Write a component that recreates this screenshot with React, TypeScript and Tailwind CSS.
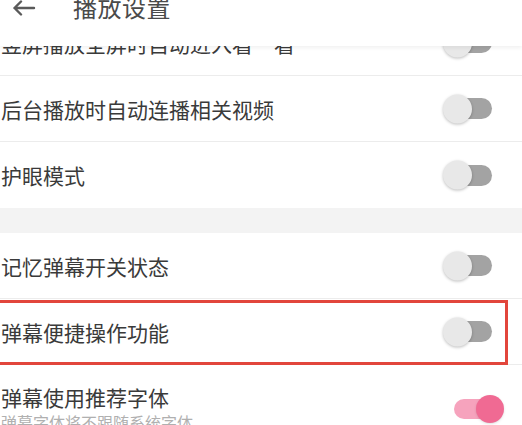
import React from 'react';

const font = { fontFamily: '"Noto Sans CJK SC", "Noto Sans", sans-serif' };

const Toggle: React.FC<{ on?: boolean }> = ({ on }) =>
  on ? (
    <div className="relative h-[20px] w-[46px] rounded-full bg-[#f6a3bd]">
      <span className="absolute right-[-4px] top-1/2 h-[28px] w-[28px] -translate-y-1/2 rounded-full bg-[#f06a93] shadow-sm" />
    </div>
  ) : (
    <div className="relative h-[21px] w-[46px] rounded-full bg-[#a3a3a3]">
      <span className="absolute left-[-3px] top-1/2 h-[29px] w-[29px] -translate-y-1/2 rounded-full bg-[#e8e8e8] shadow-[0_1px_3px_rgba(0,0,0,0.25)]" />
    </div>
  );

const Row: React.FC<{ label: string; on?: boolean; divider?: boolean; boxed?: boolean }> = ({
  label,
  on,
  divider = true,
  boxed,
}) => (
  <div className={`relative flex h-[66px] items-center justify-between pl-[1px] pr-[30px] ${divider ? 'border-b border-[#ececec]' : ''}`}>
    <span className="text-[21px] leading-[26px] text-[#3a3a3a]">{label}</span>
    <Toggle on={on} />
    {boxed && (
      <div className="pointer-events-none absolute left-[-3px] right-[14px] top-[1px] bottom-[-1px] border-[3px] border-[#e2463c]" />
    )}
  </div>
);

export default function App() {
  return (
    <div className="relative h-[425px] w-[522px] overflow-hidden bg-white" style={font}>
      <div className="absolute left-0 right-0 top-0 z-10 h-[46px] bg-white shadow-[0_2px_4px_rgba(0,0,0,0.06)]">
        <div className="flex h-[14px] items-center">
          <svg className="ml-[12px] mt-[2px]" width="24" height="16" viewBox="0 0 24 16" fill="none" stroke="#5a5a5a" strokeWidth="2.4" strokeLinecap="round" strokeLinejoin="round">
            <path d="M22 8H2.5M9 1.5 2.5 8 9 14.5" />
          </svg>
          <span className="ml-[37px] text-[24px] leading-[28px] tracking-[0.5px] text-[#4a4a4a]">播放设置</span>
        </div>
      </div>

      <div className="pt-[10px]">
        <Row label="竖屏播放全屏时自动进入看一看" />
        <Row label="后台播放时自动连播相关视频" />
        <Row label="护眼模式" divider={false} />
        <div className="h-[25px] bg-[#f3f3f3]" />
        <Row label="记忆弹幕开关状态" />
        <Row label="弹幕便捷操作功能" boxed />
        <div className="flex items-start justify-between pl-[1px] pr-[22px] pt-[20px]">
          <div className="flex flex-col">
            <span className="text-[21px] leading-[25px] text-[#3a3a3a]">弹幕使用推荐字体</span>
            <span className="mt-[2px] text-[16px] leading-[20px] text-[#b0b0b0]">弹幕字体将不跟随系统字体</span>
          </div>
          <div className="mt-[14px]">
            <Toggle on />
          </div>
        </div>
      </div>
    </div>
  );
}
